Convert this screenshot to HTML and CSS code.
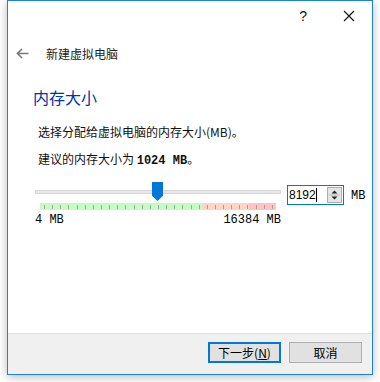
FILE: index.html
```html
<!DOCTYPE html>
<html lang="zh-CN">
<head>
    <meta charset="UTF-8">
    <title>新建虚拟电脑</title>
    <link rel="stylesheet" href="styles.css">
</head>
<body>
    <div class="window">
        <div class="titlebar">
            <span class="help">?</span>
            <svg class="close" width="12" height="12" viewBox="0 0 12 12">
                <path d="M1 1 L11 11 M11 1 L1 11" stroke="#111" stroke-width="1.1" fill="none"/>
            </svg>
        </div>

        <div class="nav">
            <svg class="back" width="13" height="11" viewBox="0 0 13 11">
                <path d="M12.5 5.5 H1.5 M6 1 L1.5 5.5 L6 10" stroke="#7a7a7a" stroke-width="1.6" fill="none"/>
            </svg>
            <span class="nav-title">新建虚拟电脑</span>
        </div>

        <div class="content">
            <h1>内存大小</h1>
            <p class="line first">选择分配给虚拟电脑的内存大小(MB)。</p>
            <p class="line">建议的内存大小为 <b class="mono">1024 MB</b>。</p>

            <div class="slider-row">
                <div class="slider">
                    <div class="track"></div>
                    <div class="handle"></div>
                    <div class="scale">
                        <div class="zone green"></div>
                        <div class="zone orange"></div>
                        <div class="zone red"></div>
                    </div>
                    <div class="limits">
                        <span>4 MB</span>
                        <span>16384 MB</span>
                    </div>
                </div>
                <div class="spinbox">
                    <span class="value">8192</span><span class="caret"></span>
                    <div class="spin">
                        <svg width="13" height="14" viewBox="0 0 13 14">
                            <path d="M3.5 5.5 L6.5 2.5 L9.5 5.5 Z M3.5 8.5 L6.5 11.5 L9.5 8.5 Z" fill="#222"/>
                            <path d="M1 7 H12" stroke="#bdbdbd" stroke-width="1"/>
                        </svg>
                    </div>
                </div>
                <span class="unit mono">MB</span>
            </div>
        </div>

        <div class="footer">
            <button class="btn default">下一步(<u>N</u>)</button>
            <button class="btn">取消</button>
        </div>
    </div>
</body>
</html>
```

FILE: styles.css
```css
* {
    margin: 0;
    padding: 0;
    box-sizing: border-box;
}

body {
    width: 380px;
    height: 382px;
    overflow: hidden;
    background: #ffffff;
    font-family: "Noto Sans CJK SC", "Liberation Sans", sans-serif;
    font-size: 12px;
    color: #000;
}

.window {
    margin-left: 7px;
    width: 366px;
    height: 375px;
    border: 1px solid #1883d7;
    background: #ffffff;
    display: flex;
    flex-direction: column;
    box-shadow: 0 2px 9px rgba(0,0,0,0.28);
}

/* title bar */
.titlebar {
    height: 31px;
    display: flex;
    align-items: center;
    justify-content: flex-end;
    padding-right: 17px;
}

.help {
    font-family: "Liberation Sans", sans-serif;
    font-size: 14px;
    margin-right: 36px;
    margin-top: -1px;
    color: #111;
}

.close {
    margin-top: -1px;
}

/* navigation */
.nav {
    height: 42px;
    display: flex;
    align-items: center;
    padding-left: 8px;
}

.back {
    margin-right: 17px;
}

.nav-title {
    font-size: 12px;
    color: #222;
}

/* page body */
.content {
    flex: 1;
    padding-left: 25px;
    padding-top: 12px;
}

h1 {
    font-size: 16px;
    font-weight: normal;
    color: #0033a8;
    line-height: 22px;
    height: 22px;
}

.line {
    margin-left: 5px;
    line-height: 16px;
    color: #111;
}

.line.first {
    margin-top: 16px;
}

.line + .line {
    margin-top: 11px;
}

.mono {
    font-family: "Liberation Mono", monospace;
    font-size: 12px;
}

/* slider */
.slider-row {
    display: flex;
    align-items: flex-start;
    margin-top: 13px;
    margin-left: 2px;
}

.slider {
    position: relative;
    width: 246px;
    padding-top: 8px;
}

.track {
    height: 4px;
    background: #e7e7e7;
    border: 1px solid #d6d6d6;
}

.handle {
    position: absolute;
    left: 117px;
    top: 0;
    width: 11px;
    height: 19px;
    background: #0078d7;
    clip-path: polygon(0 0, 100% 0, 100% 72%, 50% 100%, 0 72%);
}

.scale {
    position: relative;
    display: flex;
    height: 7px;
    margin: 9px 5px 0 5px;
}

.scale::after {
    content: "";
    position: absolute;
    left: 4px;
    right: 0;
    top: 2px;
    height: 4px;
    background-image: repeating-linear-gradient(90deg, #a89f9a 0 1px, transparent 1px 8.14px);
}

.zone {
    height: 7px;
}

.green { width: 162px; background: #c3fdc1; }
.orange { width: 47px; background: #fed5c2; }
.red { width: 27px; background: #ffc3c3; }

.limits {
    display: flex;
    justify-content: space-between;
    margin-top: 4px;
    font-family: "Liberation Mono", monospace;
    font-size: 12px;
    line-height: 13px;
}

/* spinbox */
.spinbox {
    margin-left: 6px;
    margin-top: 3px;
    width: 57px;
    height: 20px;
    border: 1px solid #0078d7;
    display: flex;
    align-items: center;
    padding-left: 1px;
    font-family: "Liberation Sans", sans-serif;
    font-size: 12px;
}

.caret {
    width: 1px;
    height: 14px;
    background: #000;
}

.spin {
    margin-left: auto;
    margin-right: 1px;
    width: 15px;
    height: 16px;
    background: #e5e5e5;
    border: 1px solid #adadad;
    display: flex;
    align-items: center;
    justify-content: center;
}

.unit {
    margin-left: 7px;
    margin-top: 7px;
}

/* footer */
.footer {
    height: 41px;
    background: #f0f0f0;
    border-top: 1px solid #dfdfdf;
    display: flex;
    justify-content: flex-end;
    align-items: flex-start;
    padding-top: 8px;
    padding-right: 10px;
    gap: 8px;
}

.btn {
    width: 73px;
    height: 21px;
    background: #e1e1e1;
    border: 1px solid #adadad;
    font-family: "Noto Sans CJK SC", sans-serif;
    font-size: 12px;
    color: #000;
    line-height: 17px;
}

.btn.default {
    border: 2px solid #0078d7;
}
```
